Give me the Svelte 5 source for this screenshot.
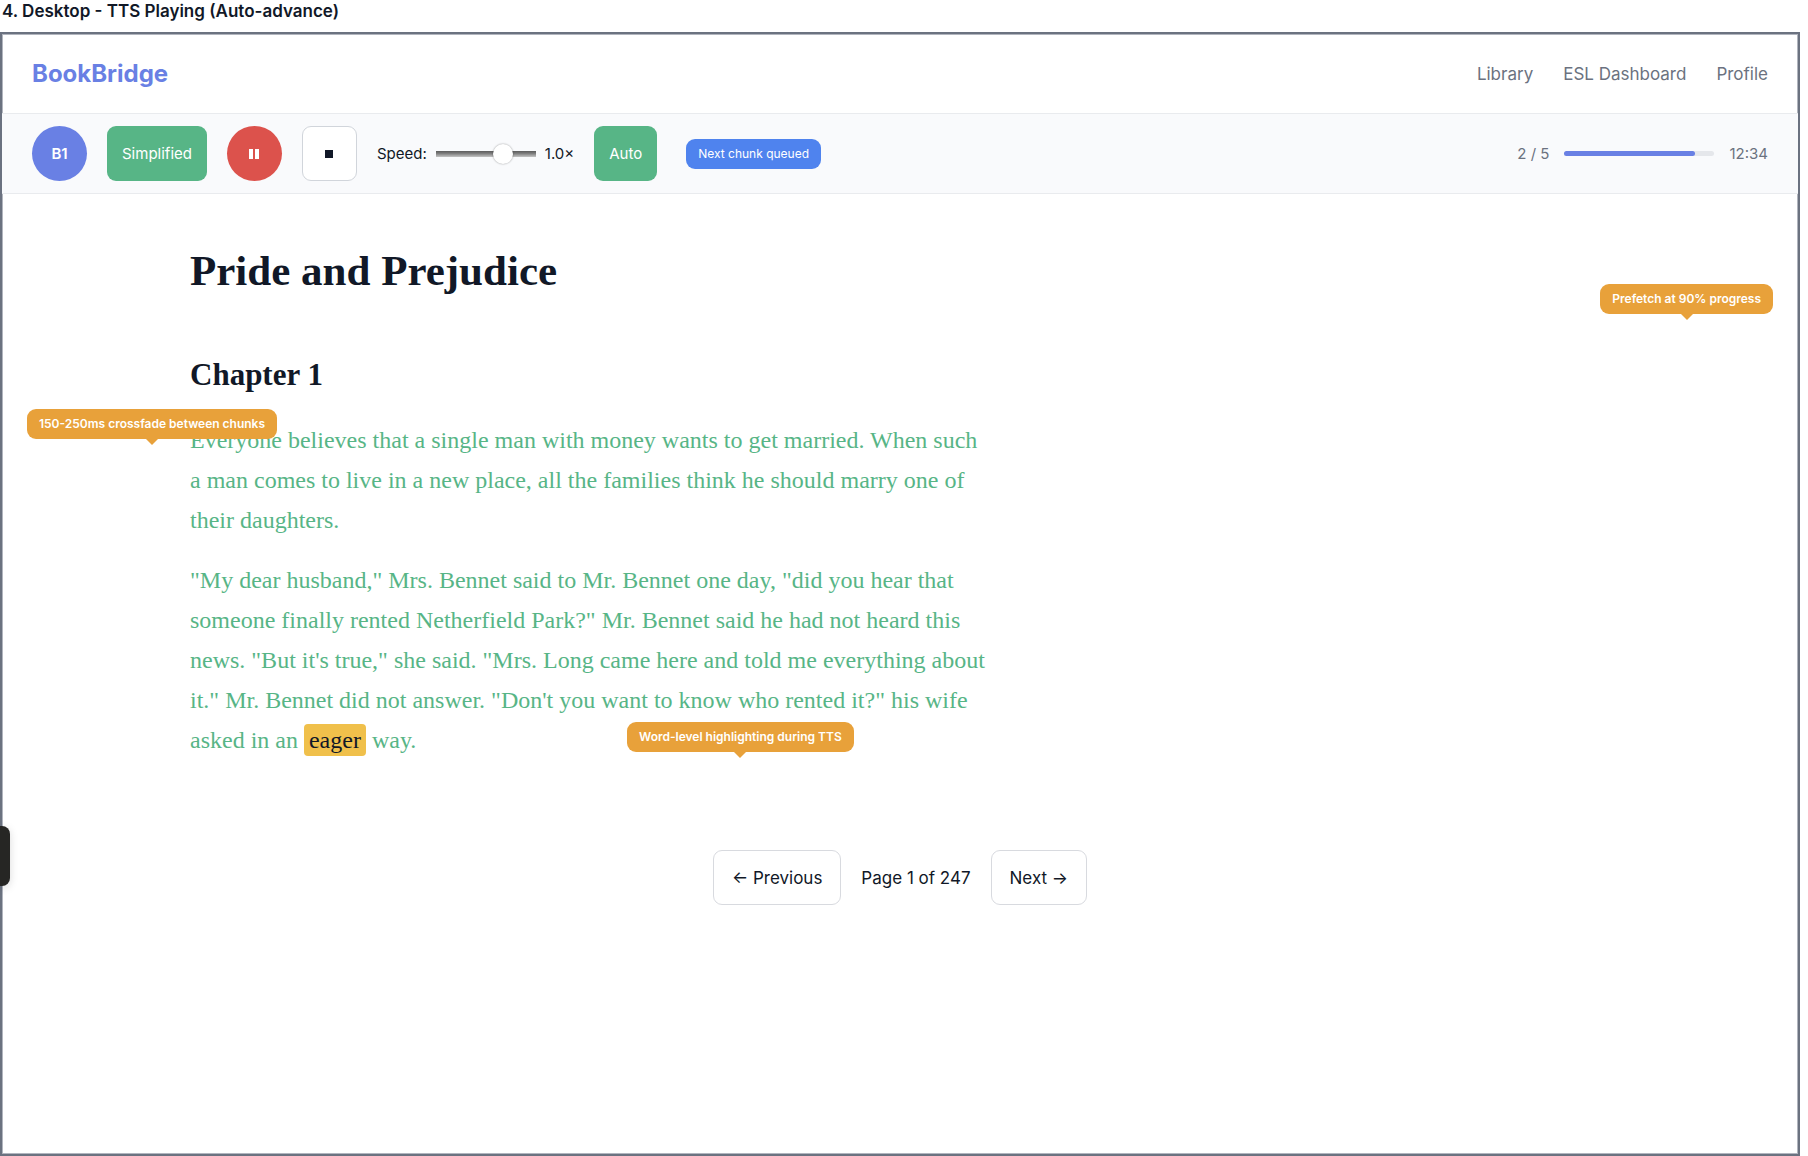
<script>
  let speed = $state(1);
  const progress = 87;
  const links = ['Library', 'ESL Dashboard', 'Profile'];
</script>

<div class="page">
  <h2 class="caption">4. Desktop - TTS Playing (Auto-advance)</h2>

  <div class="frame">
    <header class="topbar">
      <a class="brand" href="#home">BookBridge</a>
      <nav class="links">
        {#each links as link}
          <a href="#{link}">{link}</a>
        {/each}
      </nav>
    </header>

    <div class="toolbar">
      <button class="ctl round level">B1</button>
      <button class="ctl green">Simplified</button>
      <button class="ctl round pause" aria-label="Pause">
        <svg width="12" height="12" viewBox="0 0 12 12"><path d="M1 1h4v10H1zM7 1h4v10H7z" fill="#fff" /></svg>
      </button>
      <button class="ctl stop" aria-label="Stop">
        <svg width="8" height="8" viewBox="0 0 8 8"><rect width="8" height="8" fill="#111827" /></svg>
      </button>
      <div class="speed">
        <label for="speed">Speed:</label>
        <input id="speed" type="range" min="0.5" max="1.2" step="0.05" bind:value={speed} />
        <span>{speed.toFixed(1)}×</span>
      </div>
      <button class="ctl green">Auto</button>
      <span class="queued">Next chunk queued</span>
      <div class="status">
        <span>2 / 5</span>
        <div class="track"><div class="fill" style="width: {progress}%"></div></div>
        <span>12:34</span>
      </div>
    </div>

    <main>
      <article>
        <h1>Pride and Prejudice</h1>
        <h2>Chapter 1</h2>
        <p>
          Everyone believes that a single man with money wants to get married. When such a man comes to
          live in a new place, all the families think he should marry one of their daughters.
        </p>
        <p>
          "My dear husband," Mrs. Bennet said to Mr. Bennet one day, "did you hear that someone finally
          rented Netherfield Park?" Mr. Bennet said he had not heard this news. "But it's true," she
          said. "Mrs. Long came here and told me everything about it." Mr. Bennet did not answer. "Don't
          you want to know who rented it?" his wife asked in an <mark>eager</mark> way.
        </p>
      </article>

      <nav class="pager">
        <button>← Previous</button>
        <span>Page 1 of 247</span>
        <button>Next →</button>
      </nav>
    </main>

    <div class="note prefetch">Prefetch at 90% progress</div>
    <div class="note crossfade">150-250ms crossfade between chunks</div>
    <div class="note word">Word-level highlighting during TTS</div>
  </div>

  <div class="side-tab"></div>
</div>

<style>
  :global(body) {
    background: #fff;
  }
  .page {
    position: relative;
    display: flex;
    flex-direction: column;
    min-height: 100vh;
    padding-right: 8px;
    box-sizing: border-box;
    overflow: hidden;
    color: #111827;
    font-family: Inter, 'Liberation Sans', sans-serif;
    font-size: 15px;
  }
  .caption {
    margin: 0;
    padding: 0 2px 10px;
    font-size: 17px;
    line-height: 22px;
    font-weight: 600;
  }
  .frame {
    position: relative;
    flex: 1;
    border: 2px solid #6b7280;
    box-shadow: inset 0 0 0 1px #b1b5be;
  }
  .topbar {
    display: flex;
    align-items: center;
    justify-content: space-between;
    height: 79px;
    padding: 0 30px;
    border-bottom: 1px solid #e9ebee;
  }
  .brand {
    color: #6980e4;
    font-size: 24px;
    font-weight: 700;
    text-decoration: none;
  }
  .links {
    display: flex;
    gap: 30px;
  }
  .links a {
    color: #6b7280;
    font-size: 17px;
    text-decoration: none;
  }
  .toolbar {
    display: flex;
    align-items: center;
    gap: 20px;
    padding: 12px 30px;
    background: #f9fafc;
    border-bottom: 1px solid #e9ebee;
  }
  .ctl {
    display: flex;
    align-items: center;
    justify-content: center;
    height: 55px;
    min-width: 55px;
    padding: 0 15px;
    border: 0;
    border-radius: 9px;
    color: #fff;
    font: inherit;
  }
  .round {
    padding: 0;
    border-radius: 50%;
  }
  .level {
    background: #6980e4;
    font-weight: 600;
  }
  .green {
    background: #57b586;
  }
  .pause {
    background: #dc524c;
  }
  .stop {
    background: #fff;
    border: 1px solid #d1d5db;
  }
  .speed {
    display: flex;
    align-items: center;
    gap: 9px;
  }
  input[type='range'] {
    appearance: none;
    width: 100px;
    height: 20px;
    margin: 0;
    background: transparent;
  }
  input[type='range']::-webkit-slider-runnable-track {
    height: 6px;
    background: linear-gradient(#5c5c5c, #7c7c7c 40%, #c4c4c4);
  }
  input[type='range']::-webkit-slider-thumb {
    appearance: none;
    width: 20px;
    height: 20px;
    margin-top: -7px;
    border-radius: 50%;
    background: #fff;
    box-shadow: 0 0 2px rgba(0, 0, 0, 0.4);
  }
  .queued {
    margin-left: 9px;
    padding: 0 12px;
    border-radius: 9px;
    background: #4f83ee;
    color: #fff;
    font-size: 12px;
    line-height: 30px;
  }
  .status {
    display: flex;
    align-items: center;
    gap: 15px;
    margin-left: auto;
    color: #6b7280;
  }
  .track {
    width: 150px;
    height: 5px;
    border-radius: 3px;
    background: #e5e7eb;
  }
  .fill {
    height: 100%;
    border-radius: 3px;
    background: #6980e4;
  }
  article {
    max-width: 800px;
    margin-left: 188px;
    padding-top: 47px;
    font-family: Charter, 'Liberation Serif', serif;
  }
  h1 {
    margin: 0;
    font-size: 43px;
    line-height: 60px;
  }
  article h2 {
    margin: 54px 0 25px;
    font-size: 31px;
    line-height: 40px;
  }
  article p {
    margin: 0 0 20px;
    color: #57b586;
    font-size: 24px;
    line-height: 40px;
  }
  mark {
    padding: 3px 5px;
    border-radius: 4px;
    background: #f0c04b;
    color: #111827;
  }
  .pager {
    display: flex;
    align-items: center;
    justify-content: center;
    gap: 20px;
    padding-top: 70px;
    font-size: 17px;
  }
  .pager button {
    height: 55px;
    padding: 0 18px;
    border: 1px solid #d8dadf;
    border-radius: 9px;
    background: #fff;
    color: inherit;
    font: inherit;
  }
  .note {
    position: absolute;
    padding: 0 12px;
    border-radius: 9px;
    background: #e8a13a;
    color: #fff;
    font-size: 12px;
    font-weight: 600;
    line-height: 30px;
    white-space: nowrap;
  }
  .note::after {
    content: '';
    position: absolute;
    top: 100%;
    left: 50%;
    margin-left: -6px;
    border: 6px solid transparent;
    border-top-color: #e8a13a;
    border-bottom: 0;
  }
  .prefetch {
    top: 250px;
    right: 25px;
  }
  .crossfade {
    top: 375px;
    left: 25px;
  }
  .word {
    top: 688px;
    left: 625px;
  }
  .side-tab {
    position: absolute;
    top: 826px;
    left: 0;
    width: 10px;
    height: 60px;
    border-radius: 0 8px 8px 0;
    background: #262624;
    box-shadow: 0 2px 8px rgba(0, 0, 0, 0.15);
  }
</style>
